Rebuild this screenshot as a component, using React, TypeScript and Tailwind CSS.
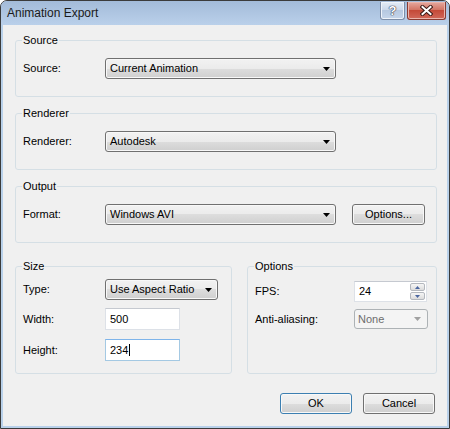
import React from "react";

function Arrow({ gray }: { gray?: boolean }) {
  return (
    <svg width="7" height="4" viewBox="0 0 7 4" className="shrink-0">
      <path d="M0 0H7L3.5 4Z" fill={gray ? "#a0a0a0" : "#000"} />
    </svg>
  );
}

function Combo({ text, cls }: { text: string; cls: string }) {
  return (
    <div
      className={`flex h-[21px] items-center justify-between rounded-[3px] border border-[#707070] bg-[linear-gradient(#f2f2f2,#ebebeb_50%,#dddddd_50%,#cfcfcf)] pl-[4px] pr-[5px] shadow-[inset_0_0_0_1px_#f8f8f8] ${cls}`}
    >
      <span className="leading-[13px]">{text}</span>
      <Arrow />
    </div>
  );
}

function Btn({ text, cls }: { text: string; cls: string }) {
  return (
    <div
      className={`flex h-[21px] items-center justify-center rounded-[3px] border bg-[linear-gradient(#f2f2f2,#ebebeb_50%,#dddddd_50%,#cfcfcf)] shadow-[inset_0_0_0_1px_#f8f8f8] ${cls}`}
    >
      <span className="leading-[13px]">{text}</span>
    </div>
  );
}

function Legend({ text }: { text: string }) {
  return <legend className="ml-[6px] px-[1px] text-[11px] leading-[14px]">{text}</legend>;
}

export default function App() {
  return (
    <div className="font-['Liberation_Sans',Arial,sans-serif] text-[11px] text-black">
      <div className="flex h-[429px] w-[450px] flex-col overflow-hidden rounded-t-[7px] border border-[#3b3b3b] bg-[#b9d1ea]">
        {/* title bar */}
        <div className="flex h-[24px] shrink-0 items-start bg-[linear-gradient(#a3bbd9,#bad0ea)]">
          <div className="flex h-[24px] flex-1 items-center pl-[6px] text-[12px] text-[#1a1a1a]">Animation Export</div>
          <div className="mr-[3px] mt-[1px] flex gap-[2px]">
            <div className="flex h-[18px] w-[25px] items-center justify-center rounded-b-[3px] border border-t-0 border-[#7d8ea8] bg-[linear-gradient(#e4ecf6,#c9d7ea_50%,#b6c8e0_50%,#c6d6ea)] shadow-[inset_0_0_0_1px_#eef3fa]">
              <span className="text-[13px] font-bold leading-[13px] text-white [text-shadow:0_0_1px_#334,0_0_1px_#334,0_0_1px_#334]">?</span>
            </div>
            <div className="flex h-[18px] w-[39px] items-center justify-center rounded-b-[3px] border border-t-0 border-[#8a3a30] bg-[linear-gradient(#e6a99f,#d0705f_50%,#c44a38_50%,#d1695a)] shadow-[inset_0_0_0_1px_#eab5ac]">
              <svg width="13" height="11" viewBox="0 0 13 11">
                <path d="M2.5 2L10.5 9M10.5 2L2.5 9" stroke="#3a1a16" strokeWidth="4" strokeLinecap="square" />
                <path d="M2.5 2L10.5 9M10.5 2L2.5 9" stroke="#fff" strokeWidth="2" strokeLinecap="square" />
              </svg>
            </div>
          </div>
        </div>

        {/* content */}
        <div className="mx-[2px] mb-[2px] flex flex-1 flex-col bg-[#f0f0f0] pl-[12px] pr-[10px] pt-[8px]">
          <fieldset className="rounded-[3px] border border-[#d5dfe5]">
            <Legend text="Source" />
            <div className="flex items-center pb-[17px] pl-[7px] pt-[11px]">
              <span className="w-[82px]">Source:</span>
              <Combo text="Current Animation" cls="w-[231px]" />
            </div>
          </fieldset>

          <fieldset className="mt-[9px] rounded-[3px] border border-[#d5dfe5]">
            <Legend text="Renderer" />
            <div className="flex items-center pb-[17px] pl-[7px] pt-[11px]">
              <span className="w-[82px]">Renderer:</span>
              <Combo text="Autodesk" cls="w-[231px]" />
            </div>
          </fieldset>

          <fieldset className="mt-[9px] rounded-[3px] border border-[#d5dfe5]">
            <Legend text="Output" />
            <div className="flex items-center pb-[17px] pl-[7px] pt-[11px]">
              <span className="w-[82px]">Format:</span>
              <Combo text="Windows AVI" cls="w-[231px]" />
              <Btn text="Options..." cls="ml-[16px] w-[73px] border-[#707070]" />
            </div>
          </fieldset>

          <div className="mt-[16px] flex gap-[15px]">
            <fieldset className="w-[217px] rounded-[3px] border border-[#d5dfe5]">
              <Legend text="Size" />
              <div className="flex flex-col pb-[12px] pl-[7px] pt-[6px]">
                <div className="flex items-center">
                  <span className="w-[82px]">Type:</span>
                  <Combo text="Use Aspect Ratio" cls="w-[113px]" />
                </div>
                <div className="mt-[8px] flex items-center">
                  <span className="w-[82px]">Width:</span>
                  <div className="flex h-[22px] w-[75px] items-center border border-[#dde1e7] border-t-[#c5c9d0] bg-white pl-[4px]">500</div>
                </div>
                <div className="mt-[9px] flex items-center">
                  <span className="w-[82px]">Height:</span>
                  <div className="flex h-[22px] w-[75px] items-center border border-[#a4c9e3] border-t-[#7eb4ea] bg-white pl-[4px]">
                    <span>234</span>
                    <span className="ml-[1px] h-[12px] w-[1px] bg-black" />
                  </div>
                </div>
              </div>
            </fieldset>

            <fieldset className="flex-1 rounded-[3px] border border-[#d5dfe5]">
              <Legend text="Options" />
              <div className="flex flex-col pl-[7px] pt-[8px]">
                <div className="flex items-center">
                  <span className="w-[99px]">FPS:</span>
                  <div className="flex h-[21px] w-[73px] items-center justify-between border border-[#dde1e7] border-t-[#c5c9d0] bg-white pl-[4px] pr-[1px]">
                    <span>24</span>
                    <div className="flex flex-col gap-[1px]">
                      <div className="flex h-[8px] w-[15px] items-center justify-center rounded-[2px] border border-[#b4b8be] bg-[linear-gradient(#f6f6f6,#dcdcdc)]">
                        <svg width="5" height="3" viewBox="0 0 5 3"><path d="M0 3H5L2.5 0Z" fill="#4a66a0" /></svg>
                      </div>
                      <div className="flex h-[8px] w-[15px] items-center justify-center rounded-[2px] border border-[#b4b8be] bg-[linear-gradient(#f6f6f6,#dcdcdc)]">
                        <svg width="5" height="3" viewBox="0 0 5 3"><path d="M0 0H5L2.5 3Z" fill="#4a66a0" /></svg>
                      </div>
                    </div>
                  </div>
                </div>
                <div className="mt-[7px] flex items-center">
                  <span className="w-[99px]">Anti-aliasing:</span>
                  <div className="flex h-[20px] w-[74px] items-center justify-between rounded-[3px] border border-[#adb2b5] bg-[#f4f4f4] pl-[3px] pr-[6px] text-[#6d6d6d]">
                    <span className="leading-[13px]">None</span>
                    <Arrow gray />
                  </div>
                </div>
              </div>
            </fieldset>
          </div>

          <div className="mr-[2px] mt-[19px] flex justify-end gap-[11px]">
            <Btn text="OK" cls="w-[72px] border-[#3c7fb1] shadow-[inset_0_0_0_1px_#9cd3f3]" />
            <Btn text="Cancel" cls="w-[72px] border-[#707070]" />
          </div>
        </div>
      </div>
    </div>
  );
}
